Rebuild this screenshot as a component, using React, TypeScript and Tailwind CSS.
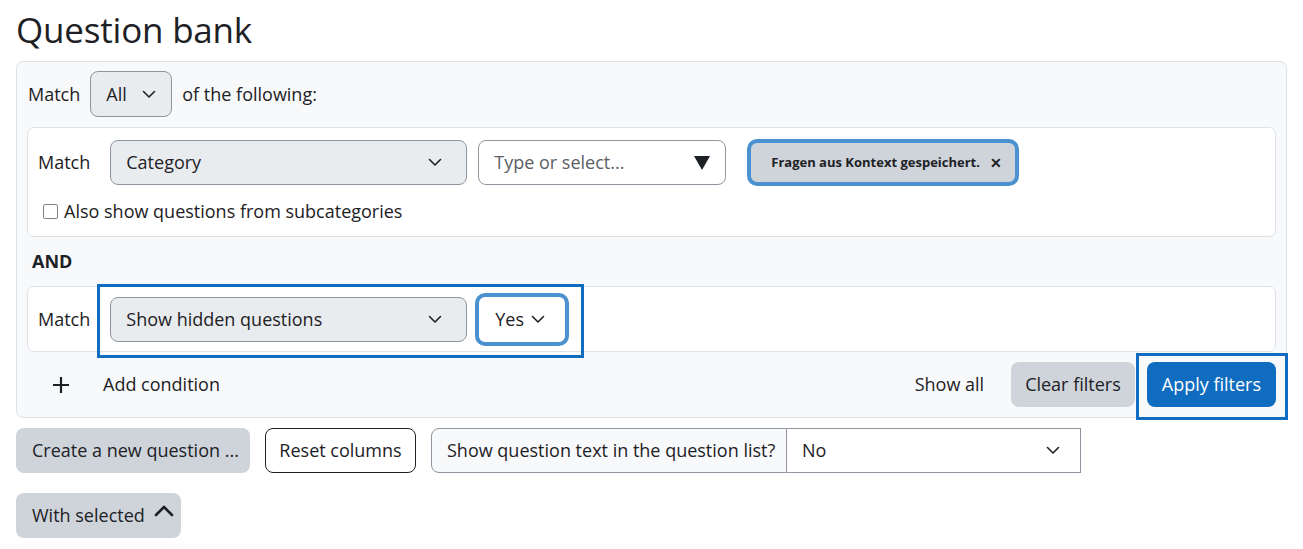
import React from 'react'

function Chevron({ className = '' }: { className?: string }) {
  return (
    <svg width="14" height="9" viewBox="0 0 14 9" className={className} fill="none">
      <path d="M1.5 1.5 L7 7 L12.5 1.5" stroke="#1d2125" strokeWidth="1.6" strokeLinecap="round" strokeLinejoin="round" />
    </svg>
  )
}

function SelectBox({ label, width, gray = true }: { label: string; width: string; gray?: boolean }) {
  return (
    <div className={`${width} h-[45px] flex items-center justify-between pl-[15px] pr-[24px] rounded-[8px] border border-[#8f959e] ${gray ? 'bg-[#e9ecef]' : 'bg-white'}`}>
      <span>{label}</span>
      <Chevron />
    </div>
  )
}

export default function App() {
  return (
    <div className="px-4 pb-4 text-[18px] text-[#1d2125] bg-white min-h-[549px]" style={{ fontFamily: '"Open Sans", "Noto Sans", sans-serif' }}>
      <h2 className="text-[35px] leading-[42px] pt-[9px] tracking-[-0.2px]">Question bank</h2>

      <div className="relative mt-[10px] bg-[#f8f9fa] border border-[#dee2e6] rounded-[7px] px-[10px] pt-[9px] pb-[10px]">
        <div className="flex items-center gap-[10px] pl-[1px]">
          <span>Match</span>
          <div className="h-[46px] w-[82px] flex items-center justify-between pl-[15px] pr-[15px] rounded-[8px] border border-[#8f959e] bg-[#e9ecef]">
            <span>All</span>
            <Chevron />
          </div>
          <span>of the following:</span>
        </div>

        <div className="mt-[10px] bg-white border border-[#dee2e6] rounded-[7px] px-[10px] pt-[11px] pb-[11px]">
          <div className="flex items-center gap-[11px]">
            <span className="mr-[9px]">Match</span>
            <SelectBox label="Category" width="w-[357px]" />
            <div className="w-[248px] h-[45px] flex items-center justify-between pl-[15px] pr-[15px] rounded-[8px] border border-[#8f959e] bg-white">
              <span className="text-[#5b6066]">Type or select...</span>
              <svg width="16" height="14" viewBox="0 0 16 14"><path d="M0 0 H16 L8 14 Z" fill="#1d2125" /></svg>
            </div>
            <div className="ml-[10px] h-[47px] w-[272px] flex items-center pl-[20px] pr-[14px] gap-[10px] rounded-[10px] border-[4px] border-[#4b91cf] bg-[#ced4da] whitespace-nowrap">
              <span className="text-[13px] font-bold">Fragen aus Kontext gespeichert.</span>
              <span className="text-[14px] font-bold leading-none">✕</span>
            </div>
          </div>
          <label className="flex items-center gap-[6px] mt-[12px] pl-[5px]">
            <span className="w-[15px] h-[15px] rounded-[2px] border-[1.5px] border-[#7d828a] bg-white" />
            <span>Also show questions from subcategories</span>
          </label>
        </div>

        <div className="mt-[11px] ml-[5px] font-bold">AND</div>

        <div className="mt-[11px] bg-white border border-[#dee2e6] rounded-[7px] px-[10px] h-[66px] flex items-center gap-[8px]">
          <span className="mr-[12px]">Match</span>
          <SelectBox label="Show hidden questions" width="w-[357px]" />
          <div className="w-[94px] h-[53px] flex items-center justify-between pl-[16px] pr-[20px] rounded-[10px] border-[4px] border-[#4b91cf] bg-white">
            <span>Yes</span>
            <Chevron />
          </div>
        </div>

        <div className="flex items-center mt-[10px] h-[45px]">
          <svg width="18" height="18" viewBox="0 0 18 18" className="ml-[25px]">
            <path d="M9 1 V17 M1 9 H17" stroke="#1d2125" strokeWidth="2.2" />
          </svg>
          <span className="ml-[33px]">Add condition</span>
          <span className="ml-auto mr-[27px]">Show all</span>
          <div className="h-[45px] px-[14px] flex items-center rounded-[8px] bg-[#ced4da]">Clear filters</div>
          <div className="ml-[12px] h-[45px] px-[15px] flex items-center rounded-[8px] bg-[#0f6cbf] text-white">Apply filters</div>
        </div>

        <div className="absolute left-[80px] top-[222px] w-[487px] h-[74px] border-[3px] border-[#0f6cbf] pointer-events-none" />
        <div className="absolute left-[1119px] top-[291px] w-[152px] h-[67px] border-[3px] border-[#0f6cbf] pointer-events-none" />
      </div>

      <div className="flex items-center mt-[10px] gap-[15px]">
        <div className="h-[45px] w-[234px] flex items-center pl-[16px] rounded-[8px] bg-[#ced4da]">Create a new question ...</div>
        <div className="h-[45px] w-[151px] flex items-center justify-center rounded-[8px] border border-[#1d2125] bg-white">Reset columns</div>
        <div className="flex h-[45px]">
          <div className="w-[356px] flex items-center pl-[15px] rounded-l-[8px] border border-[#8f959e] bg-[#f8f9fa]">Show question text in the question list?</div>
          <div className="w-[294px] flex items-center justify-between pl-[15px] pr-[20px] border border-l-0 border-[#8f959e] bg-white">
            <span>No</span>
            <Chevron />
          </div>
        </div>
      </div>

      <div className="mt-[20px] h-[45px] w-[165px] flex items-center pl-[16px] gap-[9px] rounded-[8px] bg-[#ced4da]">
        <span>With selected</span>
        <svg width="20" height="12" viewBox="0 0 20 12" className="-mt-[10px]" fill="none">
          <path d="M2 10 L10 2 L18 10" stroke="#1d2125" strokeWidth="2.6" strokeLinecap="round" strokeLinejoin="round" />
        </svg>
      </div>
    </div>
  )
}
